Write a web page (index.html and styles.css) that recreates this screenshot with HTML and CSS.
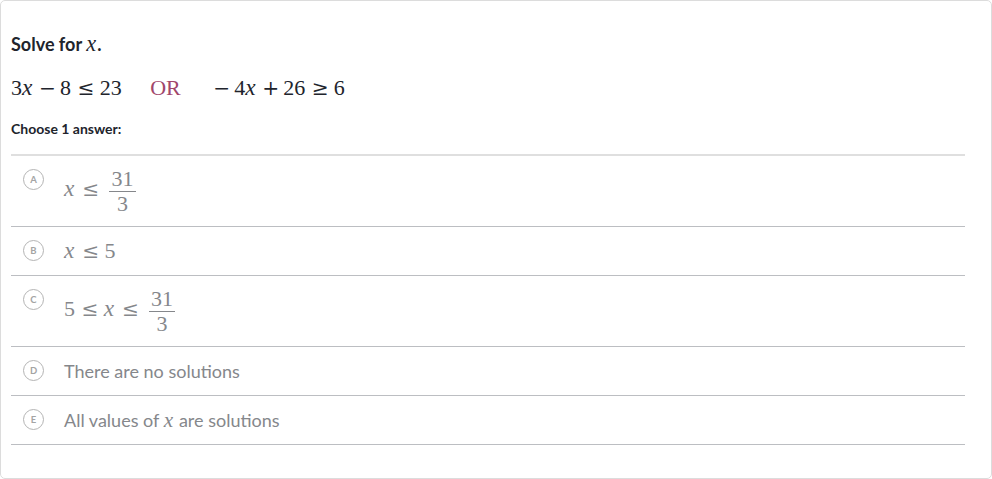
FILE: index.html
```html
<!DOCTYPE html>
<html lang="en">
<head>
    <meta charset="UTF-8">
    <meta name="viewport" content="width=device-width, initial-scale=1.0">
    <title>Solve for x</title>
    <link rel="stylesheet" href="styles.css">
</head>
<body>
    <div class="card">
        <p class="prompt">Solve for <span class="math"><span class="mi">x</span></span>.</p>

        <p class="equation math">
            <span class="mn">3</span><span class="mi">x</span><span class="mbin">−</span><span class="mn">8</span><span class="mrel">≤</span><span class="mn">23</span>
            <span class="or">OR</span>
            <span class="mbin lead">−</span><span class="mn">4</span><span class="mi">x</span><span class="mbin">+</span><span class="mn">26</span><span class="mrel">≥</span><span class="mn">6</span>
        </p>

        <p class="choose">Choose 1 answer:</p>

        <ul class="choices">
            <li class="choice">
                <span class="letter">A</span>
                <span class="answer math">
                    <span class="mi">x</span><span class="mrel">≤</span><span class="frac"><span class="num">31</span><span class="den">3</span></span>
                </span>
            </li>
            <li class="choice">
                <span class="letter">B</span>
                <span class="answer math">
                    <span class="mi">x</span><span class="mrel">≤</span><span class="mn">5</span>
                </span>
            </li>
            <li class="choice">
                <span class="letter">C</span>
                <span class="answer math">
                    <span class="mn">5</span><span class="mrel">≤</span><span class="mi">x</span><span class="mrel">≤</span><span class="frac"><span class="num">31</span><span class="den">3</span></span>
                </span>
            </li>
            <li class="choice">
                <span class="letter">D</span>
                <span class="answer">There are no solutions</span>
            </li>
            <li class="choice">
                <span class="letter">E</span>
                <span class="answer">All values of <span class="math"><span class="mi">x</span></span> are solutions</span>
            </li>
        </ul>
    </div>
</body>
</html>
```

FILE: styles.css
```css
:root {
    --text: #21242c;
    --muted: #85878b;
    --rule: #bcbec2;
    --rule-light: #dfdfdf;
    --accent: #a1466b;
}

* {
    margin: 0;
    padding: 0;
    box-sizing: border-box;
}

body {
    font-family: Lato, "Open Sans", sans-serif;
    color: var(--text);
    background: #ffffff;
}

.card {
    height: 479px;
    padding: 29px 26px 0 10px;
    border: 1px solid #dcdcdc;
    border-radius: 5px;
}

/* math, set in a Times-like face to stand in for KaTeX */
.math {
    font-family: "Liberation Serif", "Times New Roman", serif;
    font-size: 22px;
}

.mi {
    font-style: italic;
    font-size: 1.06em;
    line-height: 1;
    padding-right: 0.06em;
}

.mbin,
.mrel {
    display: inline-block;
    width: 0.778em;
    line-height: 0.8;
    text-align: center;
    font-family: "DejaVu Serif", serif;
    font-size: 0.92em;
}

.mbin {
    margin: 0 0.26em;
}

.mrel {
    margin: 0 0.32em;
}

.mbin.lead {
    margin-left: 0;
}

.prompt {
    font-size: 18px;
    font-weight: 700;
    line-height: 28px;
}

.prompt .math {
    font-weight: 400;
    font-size: 21px;
}

.equation {
    margin-top: 16px;
    line-height: 28px;
    white-space: nowrap;
}

.or {
    color: var(--accent);
    margin: 0 27px 0 23px;
}

.choose {
    margin-top: 17px;
    font-size: 14px;
    font-weight: 700;
    line-height: 20px;
}

.choices {
    list-style: none;
    margin-top: 15px;
    border-top: 2px solid var(--rule-light);
}

.choice {
    display: flex;
    align-items: flex-start;
    gap: 20px;
    padding: 12px 0 12px 12px;
    border-bottom: 1px solid var(--rule);
    color: var(--muted);
}

.letter {
    flex: none;
    width: 21px;
    height: 21px;
    margin-top: 1px;
    border: 1.5px solid #b4b4b4;
    border-radius: 50%;
    display: flex;
    align-items: center;
    justify-content: center;
    font-size: 9.5px;
    font-weight: 700;
    color: #a4a4a4;
}

.answer {
    font-size: 18px;
    line-height: 24px;
    height: 24px;
}

.answer.math {
    font-size: 22px;
    height: auto;
}

.answer .math {
    font-size: 20px;
}

.frac {
    display: inline-flex;
    flex-direction: column;
    align-items: center;
    vertical-align: middle;
    margin-left: 0.1em;
    padding: 0 0.12em;
}

.num {
    line-height: 22px;
    padding: 0 0.1em 1px;
    border-bottom: 1px solid var(--muted);
    width: 100%;
    text-align: center;
}

.den {
    line-height: 21px;
    padding-top: 1px;
}
```
